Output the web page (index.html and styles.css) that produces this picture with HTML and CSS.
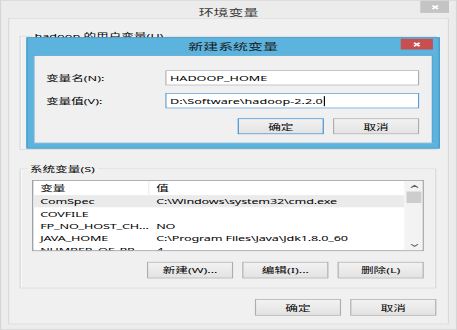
FILE: index.html
```html
<!DOCTYPE html>
<html lang="zh-CN">
<head>
<meta charset="utf-8">
<title>环境变量</title>
<link rel="stylesheet" href="styles.css">
</head>
<body>
<div class="viewport">
<div class="stage">
  <div class="win">
    <div class="titlebar">
      <span class="title">环境变量</span>
      <span class="close close-inactive"><svg viewBox="0 0 10 10"><path d="M3 3L7 7M7 3L3 7"/></svg></span>
    </div>
    <div class="client">
      <fieldset class="group group-user">
        <legend>hadoop 的用户变量(U)</legend>
      </fieldset>
      <fieldset class="group group-sys">
        <legend>系统变量(S)</legend>
        <div class="listview">
          <div class="lv-body">
            <div class="lv-row lv-head"><span>变量</span><span>值</span></div>
            <div class="lv-row selected"><span>ComSpec</span><span>C:\Windows\system32\cmd.exe</span></div>
            <div class="lv-row"><span>COVFILE</span><span></span></div>
            <div class="lv-row"><span>FP_NO_HOST_CH...</span><span>NO</span></div>
            <div class="lv-row"><span>JAVA_HOME</span><span>C:\Program Files\Java\Jdk1.8.0_60</span></div>
            <div class="lv-row"><span>NUMBER_OF_PR...</span><span>4</span></div>
          </div>
          <div class="scrollbar">
            <span class="sb-btn"><svg viewBox="0 0 8 5"><path d="M1 4L4 1L7 4"/></svg></span>
            <span class="sb-thumb"></span>
            <span class="sb-track"></span>
            <span class="sb-btn"><svg viewBox="0 0 8 5"><path d="M1 1L4 4L7 1"/></svg></span>
          </div>
        </div>
        <div class="btn-row group-btns">
          <button class="btn">新建(W)...</button>
          <button class="btn">编辑(I)...</button>
          <button class="btn">删除(L)</button>
        </div>
      </fieldset>
      <div class="btn-row footer">
        <button class="btn">确定</button>
        <button class="btn">取消</button>
      </div>
    </div>
  </div>

  <div class="dialog">
    <div class="dlg-title">
      <span class="title">新建系统变量</span>
      <span class="close close-active"><svg viewBox="0 0 10 10"><path d="M3 3L7 7M7 3L3 7"/></svg></span>
    </div>
    <div class="dlg-body">
      <div class="field">
        <label>变量名(N):</label>
        <div class="input">HADOOP_HOME</div>
      </div>
      <div class="field">
        <label>变量值(V):</label>
        <div class="input focused">D:\Software\hadoop-2.2.0<span class="caret"></span></div>
      </div>
      <div class="btn-row dlg-btns">
        <button class="btn default">确定</button>
        <button class="btn">取消</button>
      </div>
    </div>
  </div>
</div>
</div>
</body>
</html>
```

FILE: styles.css
```css
html, body {
  margin: 0;
  padding: 0;
  background: #f0f0f0;
  overflow: hidden;
}

.viewport {
  width: 457px;
  height: 330px;
  overflow: hidden;
}

.stage {
  position: relative;
  width: 398px;
  height: 460px;
  transform: scale(1.1483, 0.7174);
  transform-origin: 0 0;
  font-family: "Noto Sans", "Noto Sans CJK SC", sans-serif;
  font-size: 11px;
  line-height: 15px;
  color: #000;
}

/* ---------- outer window ---------- */
.win {
  box-sizing: border-box;
  height: 100%;
  display: flex;
  flex-direction: column;
  background: #ececec;
  border: 1px solid #d6d6d6;
}

.titlebar {
  height: 24px;
  display: grid;
  grid-template-columns: 1fr auto 1fr;
  align-items: start;
  padding: 0 6px 0 6px;
}

.titlebar .title {
  grid-column: 2;
  font-size: 13px;
  line-height: 32px;
  color: #3a3a3a;
}

.close {
  display: flex;
  align-items: center;
  justify-content: center;
}

.close svg {
  width: 12px;
  height: 12px;
  fill: none;
  stroke: #fff;
  stroke-width: 1.6;
}

.close-inactive {
  grid-column: 3;
  justify-self: end;
  width: 25px;
  height: 17px;
  background: #c4c4c4;
}

.client {
  flex: 1;
  margin: 0 6px 7px 6px;
  border: 1px solid #dadada;
  background: #f0f0f0;
  padding: 17px 10px 10px 9px;
  display: flex;
  flex-direction: column;
}

/* ---------- group boxes ---------- */
.group {
  margin: 0;
  min-width: 0;
  border: 1px solid #d9d9d9;
  box-shadow: inset 1px 1px 0 #fafafa;
  padding: 0 10px 13px 10px;
}

.group legend {
  margin-left: -4px;
  padding: 0 2px;
  line-height: 15px;
}

.group-user {
  box-sizing: border-box;
  height: 166px;
}

.group-user legend {
  margin-left: 0;
}

.group-sys {
  margin-top: 19px;
}

/* ---------- list view ---------- */
.listview {
  margin-top: 8px;
  height: 99px;
  box-sizing: border-box;
  border: 1px solid #8e9299;
  background: #fff;
  display: flex;
  overflow: hidden;
}

.lv-body {
  flex: 1;
  min-width: 0;
  overflow: hidden;
}

.lv-row {
  display: grid;
  grid-template-columns: 101px 1fr;
  height: 17px;
  line-height: 17px;
  white-space: nowrap;
}

.lv-row span {
  padding-left: 6px;
  letter-spacing: -0.15px;
}

.lv-head {
  height: 20px;
  line-height: 20px;
}

.lv-head span:first-child {
  border-right: 1px solid #ececec;
}

.lv-row.selected {
  background: #ebebeb;
}

.scrollbar {
  width: 15px;
  display: flex;
  flex-direction: column;
  background: #f3f3f3;
  border-left: 1px solid #f6f6f6;
}

.sb-btn {
  height: 15px;
  display: flex;
  align-items: center;
  justify-content: center;
}

.sb-btn svg {
  width: 8px;
  height: 6px;
  fill: none;
  stroke: #606060;
  stroke-width: 1.3;
}

.sb-thumb {
  height: 16px;
  margin: 0 1px;
  background: #cdcdcd;
}

.sb-track {
  flex: 1;
}

/* ---------- buttons ---------- */
.btn-row {
  display: flex;
  justify-content: flex-end;
  gap: 8px;
}

.group-btns {
  margin-top: 15px;
}

.footer {
  margin-top: 15px;
}

.btn {
  box-sizing: border-box;
  width: 75px;
  height: 23px;
  padding: 0;
  font: inherit;
  color: #000;
  background: linear-gradient(#f2f2f2, #e3e3e3);
  border: 1px solid #adadad;
  border-radius: 0;
}

.btn.default {
  border-color: #3d8ed0;
}

/* ---------- dialog ---------- */
.dialog {
  position: absolute;
  left: 23px;
  top: 52px;
  width: 360px;
  height: 155px;
  box-sizing: border-box;
  background: #5cb3de;
  border: 1px solid #3f96c6;
  padding: 0 5px 6px 5px;
  display: flex;
  flex-direction: column;
}

.dlg-title {
  height: 24px;
  display: grid;
  grid-template-columns: 1fr auto 1fr;
  align-items: start;
}

.dlg-title .title {
  grid-column: 2;
  font-size: 13px;
  line-height: 22px;
  color: #1b1b1b;
}

.close-active {
  grid-column: 3;
  justify-self: end;
  width: 28px;
  height: 15px;
  margin-top: 1px;
  background: #c74f4f;
}

.dlg-body {
  flex: 1;
  background: #f0f0f0;
  border: 1px solid #4a9fcf;
  padding: 20px 10px 0 10px;
  display: flex;
  flex-direction: column;
  gap: 11px;
}

.field {
  display: grid;
  grid-template-columns: 104px 221px;
  align-items: center;
}

.input {
  height: 21px;
  box-sizing: border-box;
  border: 1px solid #abadb3;
  background: #fff;
  padding: 0 3px;
  line-height: 19px;
  white-space: nowrap;
  display: flex;
  align-items: center;
}

.input.focused {
  border-color: #5b9bd5;
}

.caret {
  display: inline-block;
  width: 0;
  height: 14px;
  border-right: 1px solid #000;
  margin-left: 1px;
}

.dlg-btns {
  margin-top: 3px;
  padding-right: 1px;
}

.dlg-btns .btn {
  height: 22px;
}
```
